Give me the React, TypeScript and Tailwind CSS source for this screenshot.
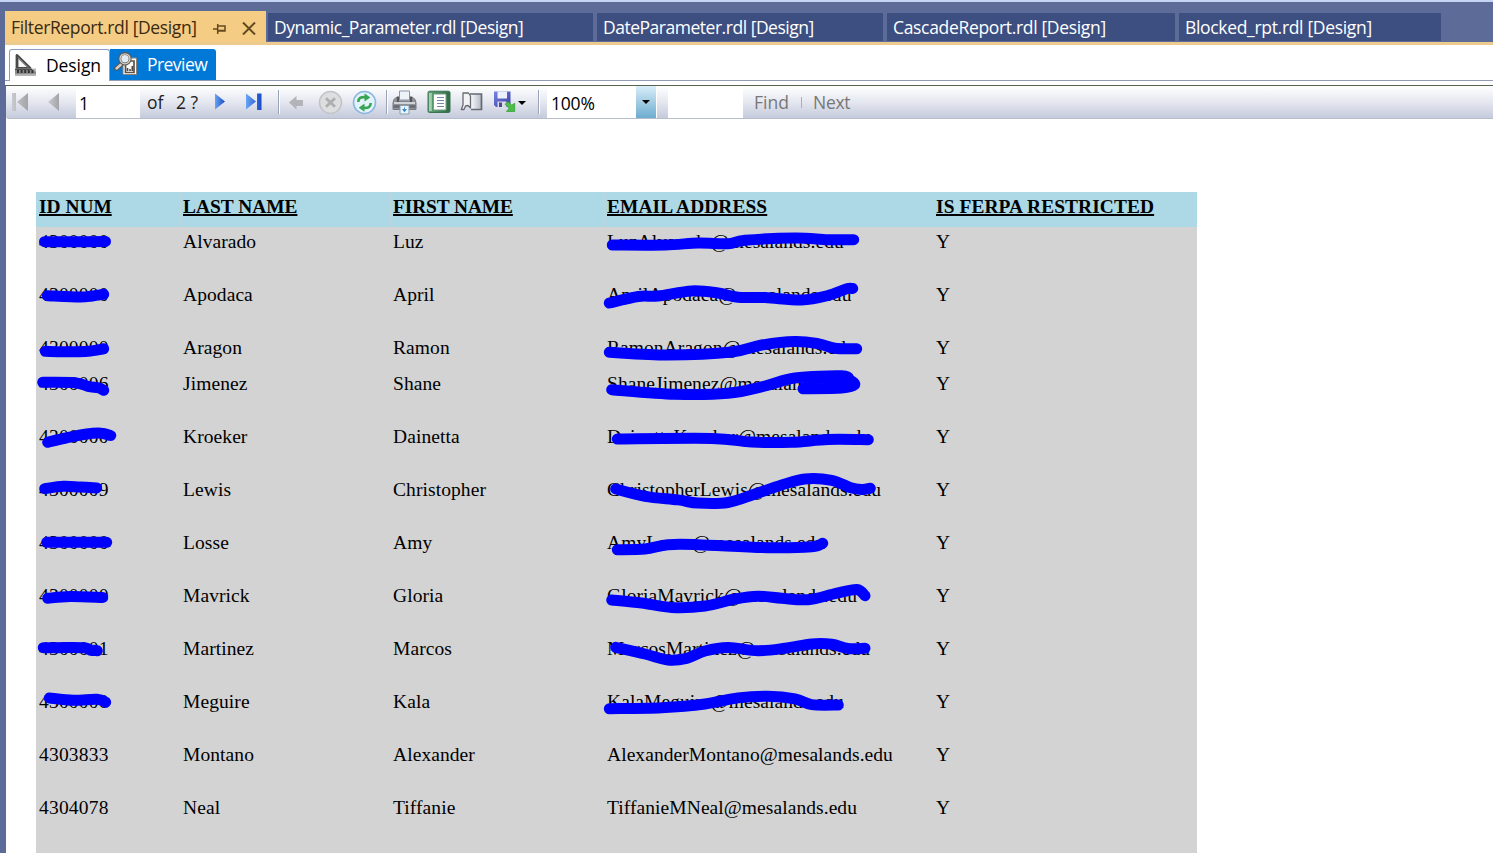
import type { ReactNode } from "react";

type Point = [number, number];

const tabs = [
  { label: "Dynamic_Parameter.rdl [Design]", box: "ml-[2px] w-[325px] pl-[6px] tracking-[-0.47px]" },
  { label: "DateParameter.rdl [Design]", box: "ml-[4px] w-[286px] pl-[6px] tracking-[-0.48px]" },
  { label: "CascadeReport.rdl [Design]", box: "ml-[4px] w-[288px] pl-[6px] tracking-[-0.33px]" },
  { label: "Blocked_rpt.rdl [Design]", box: "ml-[4px] w-[262px] pl-[6px] tracking-[-0.32px]" },
];

const headers = ["ID NUM", "LAST NAME", "FIRST NAME", "EMAIL ADDRESS", "IS FERPA RESTRICTED"];

// Digits under a redaction mark are stored as zeros.
const rows = [
  ["4300000", "Alvarado", "Luz", "LuzAlvarado@mesalands.edu", "Y"],
  ["4300000", "Apodaca", "April", "AprilApodaca@mesalands.edu", "Y"],
  ["4300000", "Aragon", "Ramon", "RamonAragon@mesalands.edu", "Y"],
  ["4300006", "Jimenez", "Shane", "ShaneJimenez@mesalands.edu", "Y"],
  ["4300000", "Kroeker", "Dainetta", "DainettaKroeker@mesalands.edu", "Y"],
  ["4300009", "Lewis", "Christopher", "ChristopherLewis@mesalands.edu", "Y"],
  ["4300000", "Losse", "Amy", "AmyLosse@mesalands.edu", "Y"],
  ["4300000", "Mavrick", "Gloria", "GloriaMavrick@mesalands.edu", "Y"],
  ["4300001", "Martinez", "Marcos", "MarcosMartinez@mesalands.edu", "Y"],
  ["4300000", "Meguire", "Kala", "KalaMeguire@mesalands.edu", "Y"],
  ["4303833", "Montano", "Alexander", "AlexanderMontano@mesalands.edu", "Y"],
  ["4304078", "Neal", "Tiffanie", "TiffanieMNeal@mesalands.edu", "Y"],
];

const marks: Point[][] = [
  [[44.5, 241.7], [75, 241.7], [105.5, 241.5]],
  [[47.3, 295.7], [80, 297], [92, 296], [103.7, 294.3]],
  [[45.3, 351.3], [70, 351.7], [88, 351.3], [103.7, 348.8]],
  [[42.7, 382.3], [75, 382.7], [88, 386.3], [99, 388], [103.7, 390.3]],
  [[47.7, 442.3], [66, 438], [86.7, 434], [101, 433.2], [110.7, 435.5]],
  [[44.7, 488.7], [63.3, 486.3], [80, 487], [96.7, 488]],
  [[46.7, 542.3], [76, 542.3], [106.7, 542.3]],
  [[47.7, 598.3], [70, 596.5], [102.7, 597.5]],
  [[43.3, 647.7], [83.3, 647.7], [90, 650], [97.3, 650.7]],
  [[49.3, 698], [73.3, 700.3], [97, 699.3], [105.7, 702.3]],
  [[612.3, 245], [665, 245], [698.3, 243], [728, 243.8], [745, 240.3], [795, 237.9], [828, 239.7], [853.7, 239.7]],
  [[609.3, 303], [638.3, 296.5], [658, 296], [691.7, 290.9], [718, 293], [738, 297.3], [765, 297.5], [801.7, 300], [828, 295.5], [846, 289], [852.7, 288.5]],
  [[609.3, 352.3], [668, 355], [731.7, 352], [761.7, 345], [795, 341.5], [818, 343.7], [835, 348.3], [856.7, 348.7]],
  [[611.7, 389.7], [675, 394.3], [728, 393.3], [765, 386], [795, 378], [841.7, 375.8], [850, 380], [854.5, 384.8], [841.7, 388], [803, 388.7]],
  [[617.3, 439], [711.7, 438.5], [751.7, 442.1], [791.7, 442.3], [828, 439.5], [868.3, 439.7]],
  [[615.7, 489], [645, 496.3], [678, 499.9], [698, 503.1], [728, 502.5], [755, 494], [781.7, 485], [805, 478.9], [831.7, 480.3], [850, 487.5], [861.7, 489.5], [870.3, 488.3]],
  [[617.3, 549.7], [645, 549], [668, 544.7], [698, 544.7], [768, 547.7], [811.7, 546.7], [822.7, 543.3]],
  [[611.7, 600], [641.7, 603], [671.7, 607.5], [705, 606], [735, 599], [758, 596.2], [781.7, 598.3], [808, 599.7], [835, 593.7], [856.7, 589.5], [865, 595.7]],
  [[615.7, 647.3], [645, 654], [668, 660], [686.7, 658.3], [705, 651], [728, 647.5], [758, 650.7], [785, 648.3], [811.7, 644], [831.7, 644.3], [848, 648.5], [865, 648.3]],
  [[609.3, 708.7], [661.7, 707.7], [705, 704], [738, 697.9], [768, 696.2], [795, 698.9], [811.7, 704.6], [838.3, 705]],
];

function smooth(points: Point[]) {
  let d = `M${points[0][0]} ${points[0][1]}`;
  for (let i = 0; i < points.length - 1; i++) {
    const a = points[Math.max(0, i - 1)];
    const b = points[i];
    const c = points[i + 1];
    const e = points[Math.min(points.length - 1, i + 2)];
    d += `C${b[0] + (c[0] - a[0]) / 6} ${b[1] + (c[1] - a[1]) / 6} ${c[0] - (e[0] - b[0]) / 6} ${c[1] - (e[1] - b[1]) / 6} ${c[0]} ${c[1]}`;
  }
  return d;
}

function Slot({ className, children }: { className: string; children?: ReactNode }) {
  return <div className={`flex h-full shrink-0 items-center ${className}`}>{children}</div>;
}

function Separator({ className }: { className: string }) {
  return (
    <Slot className={className}>
      <span className="h-6 w-px bg-[#9aa3b8]" />
      <span className="h-6 w-px bg-white" />
    </Slot>
  );
}

function Gradients() {
  return (
    <svg width="0" height="0" className="absolute">
      <defs>
        <linearGradient id="blue" x1="0" x2="1">
          <stop offset="0" stopColor="#69a4f4" />
          <stop offset="1" stopColor="#174bc5" />
        </linearGradient>
        <linearGradient id="gray" x1="0" x2="1">
          <stop offset="0" stopColor="#c9cacd" />
          <stop offset="1" stopColor="#a2a4a8" />
        </linearGradient>
        <linearGradient id="page" x1="0" x2="1">
          <stop offset="0" stopColor="#ffffff" />
          <stop offset="1" stopColor="#b3b8c6" />
        </linearGradient>
        <linearGradient id="green" x1="0" x2="1">
          <stop offset="0" stopColor="#5fa476" />
          <stop offset="1" stopColor="#2c6a44" />
        </linearGradient>
        <linearGradient id="disk" x1="0" x2="1" y2="1">
          <stop offset="0" stopColor="#7783e2" />
          <stop offset="1" stopColor="#3b3f9f" />
        </linearGradient>
      </defs>
    </svg>
  );
}

function DesignIcon() {
  return (
    <svg width="23" height="24" viewBox="0 0 23 24">
      <path d="M3 2.5 16 15.3H3Z" fill="#f6f6f6" stroke="#484848" strokeWidth="2.8" strokeLinejoin="round" />
      <path d="M4 4.5 14 14.5" stroke="#a9a9a9" strokeWidth="1" />
      <rect x="1" y="15.5" width="21" height="7" fill="#b9b9b9" />
      <path d="M1 16h17l4 3v4H1Z" fill="#8b8b8b" />
      <path d="M1 16.3h17" stroke="#444" strokeWidth="1.2" />
      <path d="M3 18.5h17" stroke="#333" strokeWidth="3" strokeDasharray="2 1.6" />
      <path d="M1 22h21" stroke="#c2c2c2" strokeWidth="1.5" />
    </svg>
  );
}

function PreviewIcon() {
  return (
    <svg width="24" height="24" viewBox="0 0 24 24">
      <path d="M9 6h13.5v16.5H9Z" fill="#fff" stroke="#8a8179" strokeWidth="1" />
      <path d="M11.5 9h8.5v11.5h-8.5Z" fill="#faf8f4" stroke="#5b534c" strokeWidth="1.7" />
      <path d="M13.5 19v-3M16 19v-2M18.3 19v-5" stroke="#504944" strokeWidth="1.6" />
      <path d="M7.5 12 2.5 16.5" stroke="#5a5550" strokeWidth="4.6" strokeLinecap="round" />
      <path d="M7.5 12 2.5 16.5" stroke="#d7cec5" strokeWidth="2.4" strokeLinecap="round" />
      <circle cx="11" cy="6.8" r="5.2" fill="#e1eaf3" stroke="#5c5752" strokeWidth="3" />
      <circle cx="11" cy="6.8" r="5" fill="none" stroke="#dcd4cb" strokeWidth="1.3" />
    </svg>
  );
}

function PrintIcon() {
  return (
    <svg width="25" height="25" viewBox="0 0 25 25">
      <path d="M7.5 1h10v9h-10Z" fill="#eef2f9" stroke="#8b94a5" />
      <path d="M2 9.5 4 7.5h2.5V11h12V7.5H21l2 2 1 3v7H1v-7Z" fill="#8e9297" stroke="#777b80" />
      <path d="M6 6.5v6M19 6.5v6" stroke="#53565b" strokeWidth="2.2" />
      <path d="M2 13h21" stroke="#d8dbdf" strokeWidth="1.8" />
      <path d="M1.5 16.5h22" stroke="#65696f" strokeWidth="2.5" />
      <path d="M8 15.5h9V24H8Z" fill="#e4f3fd" stroke="#8b9cad" />
      <path d="M12.5 17.5v4m-1.8-2h3.6l-1.8 2.2Z" fill="#3c8ec5" stroke="#3c8ec5" />
    </svg>
  );
}

function LayoutIcon() {
  return (
    <svg width="24" height="24" viewBox="0 0 24 24">
      <rect x="1" y="1.2" width="22" height="21.3" rx="1.5" fill="url(#green)" stroke="#3b7350" />
      <path d="M2 3h2.8v18H2Z" fill="#a7cdb1" />
      <path d="M6.5 4h12.5v16H6.5Z" fill="#fff" stroke="#789b85" />
      <path d="M10 7.5h7M10 10.5h7M10 13.5h7M10 16.5h7" stroke="#7389a5" strokeWidth="1.2" />
    </svg>
  );
}

function SetupIcon() {
  return (
    <svg width="24" height="22" viewBox="0 0 24 22">
      <path d="M10 3h11.5v15.5H10Z" fill="url(#page)" />
      <path d="M10 3h11.5v15.5H11" fill="none" stroke="#656a73" strokeWidth="1.7" />
      <path d="M3 2h5.5l2 3v12L8 14.5 5.5 15 4 18.5H1.3L3 14Z" fill="#f2f3f5" stroke="#686b70" strokeWidth="1.3" strokeLinejoin="round" />
    </svg>
  );
}

function SaveIcon() {
  return (
    <svg width="24" height="24" viewBox="0 0 24 24">
      <path d="M1 1.5h16.5V17H3l-2-2Z" fill="url(#disk)" />
      <path d="M4.5 1.5h9.5v7H4.5Z" fill="#edf1ff" />
      <path d="M4.5 11.5h9V17h-9Z" fill="#dadcea" />
      <path d="M6 12.5h3V17H6Z" fill="#494c8a" />
      <path d="m12 14.2 3.2-2.5 3.5 3.5 3-2v8.3h-8.2l2.5-3.3Z" fill="#4dbd47" stroke="#38a23a" strokeWidth=".8" />
    </svg>
  );
}

function Toolbar() {
  return (
    <div className="ml-px flex h-[33px] shrink-0 items-start rounded-bl-[3px] border-b border-[#b8bdca] bg-linear-to-b from-white via-[#e5e7f0] to-[#c5cbdc] text-[17.5px] text-[#222]">
      <Slot className="w-[36px] pl-[6px]">
        <svg width="18" height="20" viewBox="0 0 18 20"><path d="M0 1h4v18H0ZM16 1v18L5 10Z" fill="url(#gray)" /></svg>
      </Slot>
      <Slot className="w-[34px] pl-[6px]">
        <svg width="12" height="20" viewBox="0 0 12 20"><path d="M11 1v18L0 10Z" fill="url(#gray)" /></svg>
      </Slot>
      <Slot className="w-[64px] bg-white pl-[3px] pt-[3px] text-black">1</Slot>
      <Slot className="w-[36px] pl-[7px] pt-px">of</Slot>
      <Slot className="w-[38px] whitespace-pre pt-px">2 ?</Slot>
      <Slot className="w-[32px]">
        <svg width="13" height="20" viewBox="0 0 13 20"><path d="M1 1.5v16l10-8Z" fill="url(#blue)" /></svg>
      </Slot>
      <Slot className="w-[32px]">
        <svg width="17" height="20" viewBox="0 0 17 20"><path d="M0 1.5v16l10-8ZM11 1.5h4.5v16.5H11Z" fill="url(#blue)" /></svg>
      </Slot>
      <Separator className="w-[11px]" />
      <Slot className="w-[29px]">
        <svg width="15" height="15" viewBox="0 0 15 15"><path d="M0 7.5 7.5 1v4H14v6H7.5v3.5Z" fill="#b2b4b7" /></svg>
      </Slot>
      <Slot className="w-[34px]">
        <svg width="25" height="25" viewBox="0 0 25 25">
          <circle cx="12.5" cy="12.5" r="11" fill="#dddee0" stroke="#c3c4c7" strokeWidth="1.5" />
          <path d="m8 8.3 9 8.4m0-8.4-9 8.4" stroke="#acaeb0" strokeWidth="2.8" />
        </svg>
      </Slot>
      <Slot className="w-[34px]">
        <svg width="25" height="25" viewBox="0 0 25 25">
          <circle cx="12.5" cy="12.5" r="11" fill="#e3f3fb" stroke="#8db7df" strokeWidth="1.6" />
          <path d="M6.3 12c0-4 2.5-5.3 7-4.8M18.7 13c0 4-2.5 5.3-7 4.8" fill="none" stroke="#38a552" strokeWidth="2.6" />
          <path d="m12.5 3.2 5.8 4.3-5.8 4Zm0 10.3-5.8 4.2 5.8 4.1Z" fill="#38a552" />
        </svg>
      </Slot>
      <Separator className="w-[6px]" />
      <Slot className="w-[35px]"><PrintIcon /></Slot>
      <Slot className="w-[33px]"><LayoutIcon /></Slot>
      <Slot className="w-[33px]"><SetupIcon /></Slot>
      <Slot className="w-[45px]">
        <SaveIcon />
        <svg width="8" height="4" viewBox="0 0 8 4" className="ml-px mt-[2px]"><path d="M0 0h8L4 4Z" fill="#000" /></svg>
      </Slot>
      <Separator className="w-[9px]" />
      <Slot className="w-[89px] bg-white pl-[4px] pt-[3px] text-black"><span className="tracking-[-0.2px]">100%</span></Slot>
      <Slot className="w-[20px] justify-center bg-linear-to-b from-[#d8eef8] to-[#6caccf]">
        <svg width="8" height="4" viewBox="0 0 8 4"><path d="M0 0h8L4 4Z" fill="#000" /></svg>
      </Slot>
      <Slot className="w-px bg-white" />
      <Slot className="w-[11px]" />
      <Slot className="w-[75px] bg-white" />
      <Slot className="w-[58px] pl-[11px] pt-px text-[#777]">Find</Slot>
      <Slot className="w-[12px]"><span className="h-[11px] w-px bg-[#a9afbe]" /></Slot>
      <Slot className="pt-px tracking-[-0.3px] text-[#777]">Next</Slot>
    </div>
  );
}

function Report() {
  return (
    <div className="relative ml-[31px] mt-[73px] h-[661px] w-[1161px] shrink-0 overflow-hidden bg-[#d3d3d3] font-['Liberation_Serif',serif] text-[19.5px] leading-[22px] text-black">
      <div className="grid h-[35px] grid-cols-[144px_210px_214px_329px_264px] bg-[#add8e6] text-[19.4px] font-bold">
        {headers.map((label, i) => (
          <div key={label} className={i ? "border-l border-[#bfd5dc] pl-[2px] pt-[4px]" : "pl-[3px] pt-[4px]"}>
            <span className={`underline decoration-[1.5px] underline-offset-1 ${i > 2 ? "tracking-[0.1px]" : i === 2 ? "tracking-[-0.1px]" : ""}`}>
              {label}
            </span>
          </div>
        ))}
      </div>
      {rows.map((row, i) => (
        <div
          key={row[1]}
          className={`grid grid-cols-[144px_210px_214px_329px_264px] ${i === 2 ? "h-[36px]" : "h-[53px]"}`}
        >
          {row.map((cell, j) => (
            <div
              key={j}
              className={`whitespace-nowrap pl-[3px] pt-[4px] ${j === 0 ? "tracking-[0.2px]" : j === 3 ? "tracking-[0.07px]" : "tracking-[0.08px]"}`}
            >
              {cell}
            </div>
          ))}
        </div>
      ))}
      <svg className="absolute inset-0" width="1161" height="661" viewBox="36 192 1161 661">
        {marks.map((points, i) => (
          <path key={i} d={smooth(points)} fill="none" stroke="#0000ff" strokeWidth="11" strokeLinecap="round" strokeLinejoin="round" />
        ))}
        <path d="M800 384.5Q820 381 848 382" fill="none" stroke="#0000ff" strokeWidth="3" />
      </svg>
    </div>
  );
}

export default function App() {
  return (
    <div className="flex h-[853px] w-[1493px] flex-col overflow-hidden bg-[#5d6b99] font-['Open_Sans',sans-serif]">
      <Gradients />
      <div className="h-[2px] shrink-0 bg-[#c5d4f3]" />
      <div className="flex h-[40px] shrink-0 items-end pl-[5px]">
        <div className="flex h-[31px] w-[261px] items-center bg-[#f5cc84] pl-[6px] pt-[2px] text-[17.5px] text-[#3a2a10]">
          <span className="w-[202px] whitespace-nowrap tracking-[-0.36px]">FilterReport.rdl [Design]</span>
          <svg width="13" height="12" viewBox="0 0 13 12" className="mt-[3px]">
            <path d="M0 6h4M4.7 1v10M5 3h7v5H5M5 7.5h7.5" fill="none" stroke="#63491f" strokeWidth="1.5" />
          </svg>
          <svg width="14" height="13" viewBox="0 0 14 13" className="ml-[16px] mt-[2px]">
            <path d="m1 .5 12 12M13 .5l-12 12" stroke="#63491f" strokeWidth="2" />
          </svg>
        </div>
        {tabs.map((tab) => (
          <div key={tab.label} className={`mb-px flex h-[28px] items-center whitespace-nowrap bg-[#3d4f81] pt-px text-[17.5px] text-white ${tab.box}`}>
            {tab.label}
          </div>
        ))}
      </div>
      <div className="ml-[5px] h-[3px] shrink-0 bg-[#edcb8e]" />
      <div className="ml-[5px] flex min-h-0 flex-1 flex-col bg-white">
        <div className="flex h-[36px] shrink-0 items-end border-b border-[#929db5] pl-[4px] text-[17.5px]">
          <div className="-mb-px flex h-[32px] w-[101px] items-center rounded-t-[3px] border border-b-0 border-[#8f9bbd] bg-white pb-px pl-[4px] text-black">
            <DesignIcon />
            <span className="ml-[9px] tracking-[-0.1px]">Design</span>
          </div>
          <div className="flex h-[31px] w-[106px] items-center rounded-tr-[3px] bg-[#0078d7] pb-px pl-[4px] text-white">
            <PreviewIcon />
            <span className="ml-[9px] mt-px tracking-[-0.55px]">Preview</span>
          </div>
        </div>
        <div className="h-[4px] shrink-0" />
        <div className="h-px shrink-0 bg-[#566252]" />
        <div className="flex min-h-0 flex-1 flex-col border-l border-[#5d6b99]">
          <div className="-ml-px flex flex-col">
            <Toolbar />
          </div>
          <div className="-ml-px flex min-h-0 flex-1 flex-col border-l border-[#5d6b99]">
            <div className="-ml-px flex flex-col">
              <Report />
            </div>
          </div>
        </div>
      </div>
    </div>
  );
}
